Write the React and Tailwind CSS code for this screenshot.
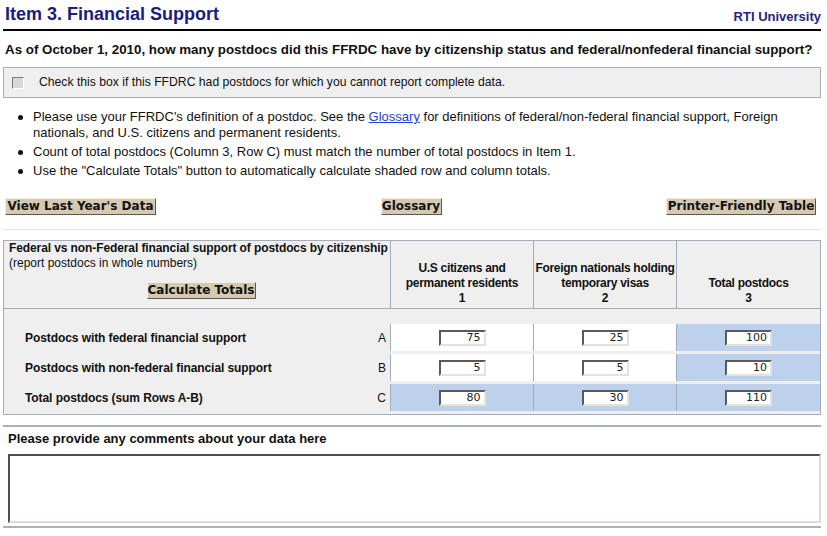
import React from "react";

const Btn = ({ w, children }) => (
  <div
    className={`${w} h-[17px] flex items-center justify-center whitespace-nowrap bg-[#d5c9b1] border border-t-[#f3eee2] border-l-[#f3eee2] border-b-[#5e584c] border-r-[#5e584c] font-['DejaVu_Sans',Verdana,sans-serif] font-bold text-[12px] leading-[15px] text-[#111]`}
  >
    {children}
  </div>
);

const Num = ({ v }) => (
  <div className="w-[47px] h-[16px] bg-white border-2 border-t-[#5a5a5a] border-l-[#5a5a5a] border-b-[#e4e2dc] border-r-[#e4e2dc] flex items-center justify-end pr-[3px] font-['DejaVu_Sans',Verdana,sans-serif] text-[11px] leading-[12px] text-[#222]">
    {v}
  </div>
);

const Row = ({ label, letter, vals, blue }) => (
  <div className="grid grid-cols-[386px_143px_143px_1fr] h-[27px]">
    <div className="flex items-center justify-between pl-[21px] pr-[4px] text-[12px]">
      <span className="font-bold tracking-[-0.08px]">{label}</span>
      <span>{letter}</span>
    </div>
    {vals.map((v, i) => (
      <div
        key={i}
        className={`border-l border-[#a3acbd] flex items-center justify-center ${
          blue || i === 2 ? "bg-[#bed1ec]" : "bg-white"
        }`}
      >
        <Num v={v} />
      </div>
    ))}
  </div>
);

export default function App() {
  return (
    <div className="w-[827px] h-[536px] overflow-hidden bg-white text-[#111] font-['Liberation_Sans',Arial,sans-serif]">
      <div className="ml-[3px] w-[818px] flex flex-col">
        {/* Header */}
        <div className="flex items-end justify-between pl-[2px] pt-[4px] pb-[4px] border-b-2 border-black">
          <div className="text-[18px] leading-[21px] font-bold text-[#1b1b80]">
            Item 3. Financial Support
          </div>
          <div className="text-[13px] leading-[16px] font-bold text-[#25257f]">
            RTI University
          </div>
        </div>

        <div className="mt-[11px] pl-[2px] text-[13.35px] leading-[16px] font-bold whitespace-nowrap">
          As of October 1, 2010, how many postdocs did this FFRDC have by citizenship status and federal/nonfederal financial support?
        </div>

        <div className="mt-[9px] h-[31px] flex items-center bg-[#efefef] border border-[#a8b0c0] pl-[8px] text-[12.2px]">
          <div className="w-[12px] h-[12px] bg-[#d8d8d8] border border-t-[#7a7a7a] border-l-[#7a7a7a] border-b-[#ffffff] border-r-[#ffffff]" />
          <span className="ml-[15px]">
            Check this box if this FFDRC had postdocs for which you cannot report complete data.
          </span>
        </div>

        <ul className="mt-[11px] flex flex-col gap-[3px] text-[13px] leading-[16px]">
          {[
            <>
              Please use your FFRDC's definition of a postdoc. See the <u className="text-[#1f3fd1]">Glossary</u> for definitions of federal/non-federal financial support, Foreign nationals, and U.S. citizens and permanent residents.
            </>,
            <>Count of total postdocs (Column 3, Row C) must match the number of total postdocs in Item 1.</>,
            <>Use the "Calculate Totals" button to automatically calculate shaded row and column totals.</>,
          ].map((t, i) => (
            <li key={i} className="flex pl-[15px]">
              <span className="w-[5px] h-[5px] mt-[6px] rounded-full bg-[#111] shrink-0" />
              <p className="ml-[10px] pr-[40px]">{t}</p>
            </li>
          ))}
        </ul>

        <div className="mt-[19px] flex items-center justify-between pl-[2px] pr-[5px]">
          <Btn w="w-[151px]">View Last Year's Data</Btn>
          <Btn w="w-[61px]">Glossary</Btn>
          <Btn w="w-[150px]">Printer-Friendly Table</Btn>
        </div>

        <div className="mt-[14px] h-px bg-[#e6e6e6]" />

        {/* Table */}
        <div className="mt-[10px] border border-[#a3acbd] bg-[#efefef]">
          <div className="grid grid-cols-[386px_143px_143px_1fr] h-[68px] border-b border-[#a3acbd] text-[12px] leading-[15px]">
            <div className="pl-[5px] flex flex-col">
              <div className="font-bold whitespace-nowrap tracking-[-0.1px]">
                Federal vs non-Federal financial support of postdocs by citizenship
              </div>
              <div>(report postdocs in whole numbers)</div>
              <div className="mt-[11px] flex justify-center pl-[3px]">
                <Btn w="w-[109px]">Calculate Totals</Btn>
              </div>
            </div>
            <div className="border-l border-[#a3acbd] flex flex-col justify-end items-center text-center font-bold pb-[2px] tracking-[-0.3px] whitespace-nowrap">
              <div>U.S citizens and</div>
              <div>permanent residents</div>
              <div>1</div>
            </div>
            <div className="border-l border-[#a3acbd] flex flex-col justify-end items-center text-center font-bold pb-[2px] tracking-[-0.3px] whitespace-nowrap">
              <div>Foreign nationals holding</div>
              <div>temporary visas</div>
              <div>2</div>
            </div>
            <div className="border-l border-[#a3acbd] flex flex-col justify-end items-center text-center font-bold pb-[2px] tracking-[-0.3px] whitespace-nowrap">
              <div>Total postdocs</div>
              <div>3</div>
            </div>
          </div>
          <div className="pt-[15px] pb-[3px] flex flex-col gap-[3px]">
            <Row label="Postdocs with federal financial support" letter="A" vals={["75", "25", "100"]} />
            <Row label="Postdocs with non-federal financial support" letter="B" vals={["5", "5", "10"]} />
            <Row label="Total postdocs (sum Rows A-B)" letter="C" vals={["80", "30", "110"]} blue />
          </div>
        </div>

        <div className="mt-[10px] h-[2px] bg-[#a8b0c0]" />
        <div className="mt-[4px] pl-[5px] text-[13px] leading-[16px] font-bold">
          Please provide any comments about your data here
        </div>
        <div className="mt-[7px] ml-[5px] h-[69px] bg-white border-2 border-t-[#505050] border-l-[#505050] border-b-[#dcdad4] border-r-[#dcdad4]" />
        <div className="mt-[3px] h-[2px] bg-[#a8b0c0]" />
      </div>
    </div>
  );
}
